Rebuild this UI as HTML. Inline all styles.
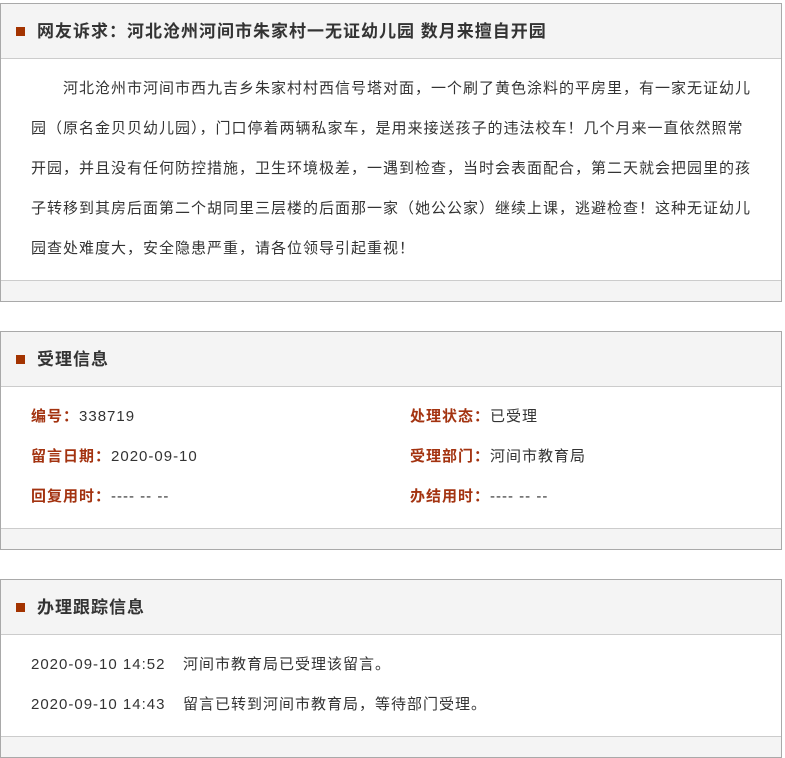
<!DOCTYPE html>
<html><head><meta charset="utf-8"><style>
body{margin:0;background:#fff;font-family:"Liberation Sans","Noto Sans CJK SC",sans-serif;color:#333;width:785px;height:744px;overflow:hidden}
.box{position:absolute;left:0;width:780px;border:1px solid #a9a9a9;background:#fff}
.hd{height:54px;background:#f4f4f4;border-bottom:1px solid #ccc;position:relative}
.hd i{position:absolute;left:15px;top:23px;width:9px;height:9px;background:#a33300}
.hd span{position:absolute;left:36px;top:0;line-height:55px;font-size:17px;font-weight:bold;color:#333;letter-spacing:1px;white-space:nowrap}
.bd{padding:10px 30px 11px 30px;font-size:15px;line-height:40px;letter-spacing:1px}
.ft{height:20px;background:#f4f4f4;border-top:1px solid #ccc}
.l{white-space:nowrap}
.row{display:flex}.row div{width:379px;flex-shrink:0}
b{color:#a33310}
.t{display:inline-block;width:152px}
</style></head><body>
<div class="box" style="top:3px">
<div class="hd"><i></i><span>网友诉求：河北沧州河间市朱家村一无证幼儿园 数月来擅自开园</span></div>
<div class="bd">
<div class="l">&emsp;&emsp;河北沧州市河间市西九吉乡朱家村村西信号塔对面，一个刷了黄色涂料的平房里，有一家无证幼儿</div>
<div class="l">园（原名金贝贝幼儿园），门口停着两辆私家车，是用来接送孩子的违法校车！几个月来一直依然照常</div>
<div class="l">开园，并且没有任何防控措施，卫生环境极差，一遇到检查，当时会表面配合，第二天就会把园里的孩</div>
<div class="l">子转移到其房后面第二个胡同里三层楼的后面那一家（她公公家）继续上课，逃避检查！这种无证幼儿</div>
<div class="l">园查处难度大，安全隐患严重，请各位领导引起重视！</div>
</div>
<div class="ft"></div>
</div>
<div class="box" style="top:331px">
<div class="hd"><i></i><span>受理信息</span></div>
<div class="bd">
<div class="row"><div><b>编号：</b>338719</div><div><b>处理状态：</b>已受理</div></div>
<div class="row"><div><b>留言日期：</b>2020-09-10</div><div><b>受理部门：</b>河间市教育局</div></div>
<div class="row"><div><b>回复用时：</b>---- -- --</div><div><b>办结用时：</b>---- -- --</div></div>
</div>
<div class="ft"></div>
</div>
<div class="box" style="top:579px">
<div class="hd"><i></i><span>办理跟踪信息</span></div>
<div class="bd">
<div><span class="t">2020-09-10 14:52</span>河间市教育局已受理该留言。</div>
<div><span class="t">2020-09-10 14:43</span>留言已转到河间市教育局，等待部门受理。</div>
</div>
<div class="ft"></div>
</div>
</body></html>
